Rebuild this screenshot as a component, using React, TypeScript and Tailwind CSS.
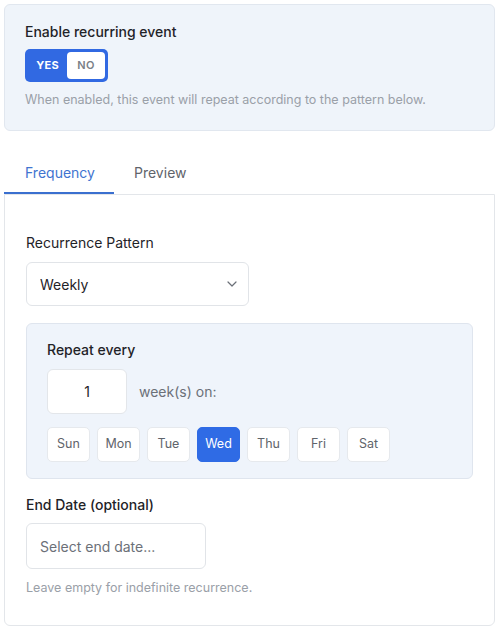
import React, { useState } from 'react';

const DAYS = ['Sun', 'Mon', 'Tue', 'Wed', 'Thu', 'Fri', 'Sat'];

export default function App() {
  const [enabled, setEnabled] = useState(true);
  const [tab, setTab] = useState<'frequency' | 'preview'>('frequency');
  const [interval, setInterval] = useState('1');
  const [selectedDays, setSelectedDays] = useState<string[]>(['Wed']);

  const toggleDay = (d: string) => {
    setSelectedDays(selectedDays.includes(d) ? selectedDays.filter((x) => x !== d) : [...selectedDays, d]);
  };

  return (
    <div className="p-1 bg-white min-h-[630px] text-[#1f2328]" style={{ fontFamily: 'Inter, "Noto Sans", sans-serif' }}>
      {/* toggle card */}
      <div className="rounded-md border border-[#e1e7ef] bg-[#eff4fa] px-5 pt-[17px] pb-[22px]">
        <div className="text-[14px] leading-5 font-medium">Enable recurring event</div>
        <div className="mt-[7px] inline-flex rounded-[5px] bg-[#3169e2] p-[3px]">
          <button
            onClick={() => setEnabled(true)}
            className={`w-[39px] h-[27px] rounded-[4px] text-[11px] font-bold tracking-wide ${enabled ? 'text-white' : 'bg-white text-[#7a7f87]'}`}
          >
            YES
          </button>
          <button
            onClick={() => setEnabled(false)}
            className={`w-[38px] h-[27px] rounded-[4px] text-[11px] font-semibold tracking-wide ${enabled ? 'bg-white text-[#7a7f87]' : 'text-white'}`}
          >
            NO
          </button>
        </div>
        <p className="mt-[10px] text-[12.5px] leading-4 text-[#9aa0a8]">
          When enabled, this event will repeat according to the pattern below.
        </p>
      </div>

      {/* tabs */}
      <div className="mt-[23px] flex">
        <button
          onClick={() => setTab('frequency')}
          className={`w-[110px] text-left pl-[21px] pt-[9px] pb-[9px] text-[14px] leading-5 border-b-2 ${tab === 'frequency' ? 'border-[#3a6fcf] text-[#3f74d0]' : 'border-transparent text-[#5f646b]'}`}
        >
          Frequency
        </button>
        <button
          onClick={() => setTab('preview')}
          className={`px-5 pt-[9px] pb-[9px] text-[14px] leading-5 border-b-2 ${tab === 'preview' ? 'border-[#3a6fcf] text-[#3f74d0]' : 'border-transparent text-[#5f646b]'}`}
        >
          Preview
        </button>
      </div>

      <div className="rounded-b-md border border-[#e3e6ea] px-[21px] pt-[38px] pb-[29px]">
        <label className="block text-[14px] leading-5">Recurrence Pattern</label>
        <div className="mt-[9px] relative w-[223px]">
          <select className="w-full h-[44px] appearance-none rounded-md border border-[#e1e4e8] bg-white pl-[13px] text-[14px] text-[#1f2328] outline-none">
            <option>Weekly</option>
            <option>Daily</option>
            <option>Monthly</option>
            <option>Yearly</option>
          </select>
          <svg className="absolute right-[12px] top-[19px] pointer-events-none" width="10" height="6" viewBox="0 0 10 6" fill="none">
            <path d="M1 1l4 4 4-4" stroke="#6b7078" strokeWidth="1.2" strokeLinecap="round" strokeLinejoin="round" />
          </svg>
        </div>

        <div className="mt-[17px] rounded-md border border-[#dfe5ee] bg-[#eff4fb] px-5 pt-[16px] pb-[16px]">
          <div className="text-[14px] leading-5 font-medium">Repeat every</div>
          <div className="mt-[9px] flex items-center gap-[12px]">
            <input
              value={interval}
              onChange={(e) => setInterval(e.target.value)}
              className="w-[80px] h-[45px] rounded-md border border-[#e3e6ea] bg-white text-center text-[14px] outline-none"
            />
            <span className="text-[14px] text-[#6b7078]">week(s) on:</span>
          </div>
          <div className="mt-[13px] flex gap-[7px]">
            {DAYS.map((d) => {
              const on = selectedDays.includes(d);
              return (
                <button
                  key={d}
                  onClick={() => toggleDay(d)}
                  className={`w-[43px] h-[35px] rounded-[5px] border text-[12.5px] ${on ? 'bg-[#2f6be5] border-[#2f6be5] text-white' : 'bg-white border-[#e6e9ed] text-[#5f646b]'}`}
                >
                  {d}
                </button>
              );
            })}
          </div>
        </div>

        <label className="mt-[16px] block text-[14px] leading-5 font-medium">End Date (optional)</label>
        <input
          placeholder="Select end date..."
          className="mt-[8px] w-[180px] h-[46px] rounded-md border border-[#e1e4e8] bg-white px-[13px] text-[14px] outline-none placeholder:text-[#6b7078]"
        />
        <p className="mt-[11px] text-[12.5px] leading-4 text-[#9aa0a8]">Leave empty for indefinite recurrence.</p>
      </div>
    </div>
  );
}
